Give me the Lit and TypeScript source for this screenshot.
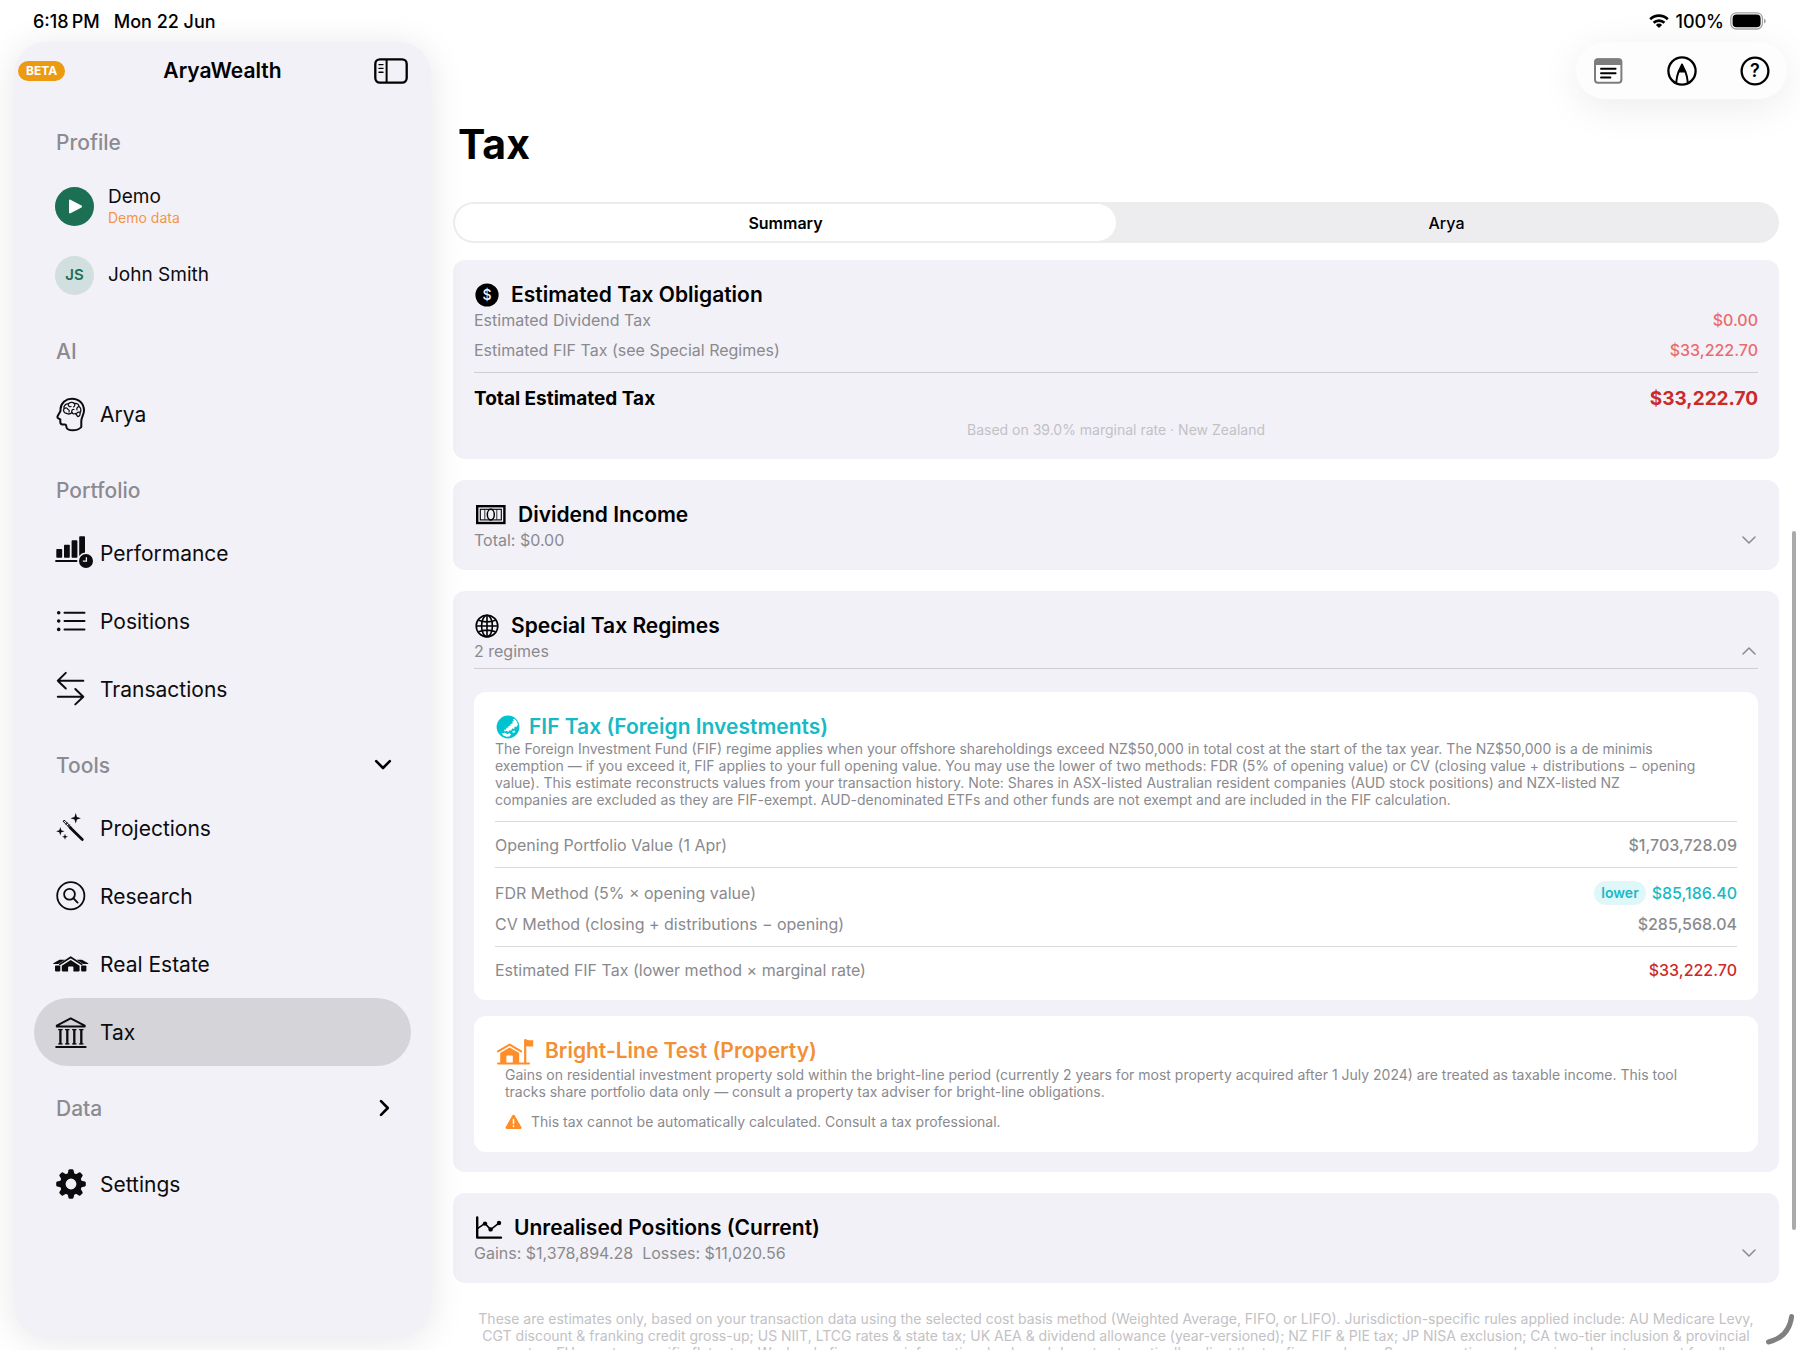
import { LitElement, html, svg, css, nothing, type TemplateResult } from "lit";
import { customElement, state } from "lit/decorators.js";
import { classMap } from "lit/directives/class-map.js";

type Icon = TemplateResult;

const box = (w: number, h: number, body: Icon) =>
  html`<svg class="icon" width=${w} height=${h} viewBox="0 0 ${w} ${h}" aria-hidden="true">${body}</svg>`;

const star = (x: number, y: number, r: number) => {
  const k = r * 0.24;
  return svg`<path fill="currentColor" d="M${x} ${y - r}L${x + k} ${y - k}L${x + r} ${y}L${x + k} ${y + k}L${x} ${y + r}L${x - k} ${y + k}L${x - r} ${y}L${x - k} ${y - k}Z"/>`;
};

const line = (d: string, w = 2) =>
  svg`<path d=${d} fill="none" stroke="currentColor" stroke-width=${w} stroke-linecap="round" stroke-linejoin="round"/>`;

/* Sidebar icons, each on a 40 x 40 canvas */
const navIcons: Record<string, Icon> = {
  arya: svg`
    ${line("M9.5 15C10 8.5 15 4.7 21 4.7C28 4.7 33 9.5 33 16.5C33 20.5 30.5 23 30.3 27V33C28.5 35.3 25 36.3 21.5 36.3C18.5 36.3 16 35 15.5 33.5C15.2 32 15.5 30.4 14 30.4H11.5C9.8 30.4 9.3 29.5 9.3 28V25.3L7.3 24.3C6.3 23.8 6.2 23 6.7 22L9.5 17Z")}
    ${line("M16 19.5C13 19.5 11.8 16.5 13 14.5C12.5 11.5 15 9.5 17.3 10C18.5 8 22 7.8 23.3 9.5C26 8.8 28 10.5 28 12.5C30.3 14 30.3 17 29 18.5C29.5 20.5 28.5 22.3 26.8 22.6L24.5 19.5C22.5 20.5 21.3 19.5 21 18.5C19.5 20 17.5 20.3 16 19.5Z", 1.3)}
    ${line("M13.5 14.5C15 13.3 16.5 14 17 15.5M17.3 10.2C17 12 18.5 13.3 20 12.5M21 18.5C20 16.5 21.5 15 23 15.5M23.3 9.7C24.3 11 23.8 12.5 22.5 13M28 12.7C26.3 13 25.3 14.3 26 16M29 18.3C27.5 17.8 26 18.5 25.5 19.8M18 18C18.5 17 18.3 16.3 17.8 15.8", 1.2)}`,
  performance: svg`
    <g fill="currentColor">
      <rect x="5.3" y="16" width="5.9" height="8.8" rx="0.8"/>
      <rect x="13" y="11.7" width="5.8" height="13.1" rx="0.8"/>
      <rect x="20.6" y="7.3" width="5.8" height="17.5" rx="0.8"/>
      <path d="M29 3.3H33.2Q34 3.3 34 4.1V19.6A8.4 8.4 0 0 0 28.2 23V4.1Q28.2 3.3 29 3.3Z"/>
      <circle cx="35" cy="28" r="7"/>
      <rect x="4.3" y="27" width="22" height="2" rx="0.6"/>
    </g>
    <path d="M35.4 24.2V28.2H31.8" fill="none" stroke="#f2f1f8" stroke-width="1.3"/>`,
  positions: svg`
    <g fill="currentColor"><circle cx="7.7" cy="11.8" r="1.8"/><circle cx="7.7" cy="20" r="1.8"/><circle cx="7.7" cy="28.4" r="1.8"/></g>
    ${line("M13.5 11.8H33.5M13.5 20H33.5M13.5 28.4H33.5")}`,
  transactions: line("M32.3 11.7H6.8M14.8 3.9L6.8 11.7L14.8 19.5M6.8 27.7H32.3M24.3 20L32.3 27.7L24.3 35.4"),
  projections: svg`
    ${line("M19 19.4L31.3 31.6", 2.8)}
    ${line("M13.6 12.4L20.4 19.2M12.4 13.6L19.2 20.4M12.4 13.6Q12 12 13.6 12.4M15 16.2L16.4 14.8M17 18.2L18.4 16.8", 1)}
    ${star(24.7, 10.3, 5.2)}${star(9.3, 23.3, 4.2)}${star(14, 28.7, 3)}`,
  research: svg`
    <circle cx="19.8" cy="19.8" r="13.6" fill="none" stroke="currentColor" stroke-width="1.8"/>
    <circle cx="18.5" cy="18.3" r="5.4" fill="none" stroke="currentColor" stroke-width="1.8"/>
    ${line("M22.5 22.4L26.6 26.6", 1.9)}`,
  estate: svg`
    ${line("M8.8 20.4L19.7 13.2L30.7 20.4", 1.7)}
    <g fill="currentColor">
      <path d="M19.7 15.9L28.6 21.8V26.6Q28.6 27.4 27.8 27.4H22.4V23.2Q22.4 22.4 21.6 22.4H17.9Q17.1 22.4 17.1 23.2V27.4H11.6Q10.8 27.4 10.8 26.6V21.8Z"/>
      <path d="M8.5 15.8H14L7.4 20H2.6Q1.6 19.8 2.4 19.2Z"/>
      <path d="M31 15.8H25.5L32.1 20H36.9Q37.9 19.8 37.1 19.2Z"/>
      <rect x="4" y="21.6" width="5.3" height="5.8" rx="0.8"/>
      <rect x="30.1" y="21.6" width="5.3" height="5.8" rx="0.8"/>
    </g>`,
  tax: svg`
    <path d="M5.8 13.6L19.7 6.4L33.7 13.6V14.4H5.8Z" fill="none" stroke="currentColor" stroke-width="2" stroke-linejoin="round"/>
    <path d="M9.4 17.5V32.3M16.3 17.5V32.3M23.3 17.5V32.3M30.3 17.5V32.3" stroke="currentColor" stroke-width="2.3"/>
    <path d="M7.2 17.6H11.6M14.1 17.6H18.5M21.1 17.6H25.5M28.1 17.6H32.5M7.2 31.9H11.6M14.1 31.9H18.5M21.1 31.9H25.5M28.1 31.9H32.5" stroke="currentColor" stroke-width="1.2"/>
    ${line("M5.2 34.9H34.6")}`,
  settings: svg`
    <circle cx="20" cy="20" r="8.2" fill="none" stroke="currentColor" stroke-width="5.6"/>
    ${[0, 45, 90, 135, 180, 225, 270, 315].map(
      (a) => svg`<path d="M16.4 10.5L17.5 6.2Q17.8 5.2 18.8 5.2H21.2Q22.2 5.2 22.5 6.2L23.6 10.5Z" fill="currentColor" transform="rotate(${a} 20 20)"/>`
    )}`,
};

const dollarIcon = box(26, 28, svg`
  <circle cx="13" cy="14" r="11.6" fill="#000"/>
  <text x="13" y="19" text-anchor="middle" font-size="14" font-weight="500" fill="#f2f1f7">$</text>`);

const noteIcon = box(33, 28, svg`
  <rect x="3.2" y="5.2" width="27.2" height="16.8" fill="none" stroke="#000" stroke-width="2.4"/>
  <rect x="6.3" y="8.3" width="21" height="10.6" fill="none" stroke="#000" stroke-width="1.1"/>
  <path d="M10.8 8.5V18.7M22.8 8.5V18.7" stroke="#000" stroke-width="0.8"/>
  <ellipse cx="16.8" cy="13.6" rx="3.5" ry="5.3" fill="none" stroke="#000" stroke-width="1.5"/>`);

const globeIcon = box(26, 28, svg`
  <g fill="none" stroke="#000" stroke-width="1.6">
    <circle cx="13" cy="14" r="10.8"/>
    <ellipse cx="13" cy="14" rx="5.4" ry="10.8"/>
    <path d="M13 3.2V24.8M2.2 14H23.8M4.6 8.2Q13 11.6 21.4 8.2M4.6 19.8Q13 16.4 21.4 19.8"/>
  </g>`);

const chartIcon = box(29, 28, svg`
  <path d="M3.2 3.4V23.6H27" fill="none" stroke="#000" stroke-width="2.4" stroke-linecap="round" stroke-linejoin="round"/>
  <path d="M3.4 14.6L11 9.4L16.6 15.6L25.2 8.8" fill="none" stroke="#000" stroke-width="1.6" stroke-linejoin="round"/>
  <g><circle cx="11" cy="9.6" r="2.2"/><circle cx="16.6" cy="15.4" r="2.2"/><circle cx="25" cy="9" r="2.2"/></g>`);

const earthIcon = box(26, 28, svg`
  <circle cx="13" cy="14" r="11.4" fill="#00c3d0"/>
  <g fill="#fff">
    <path d="M23 11.8L21.6 8L19.4 6L17.8 6.2L19 8L17.2 8.8L17.8 10.4L15.4 11L15.8 12.6L13.4 13L13.6 14.6L11.4 14.8L11.2 16.4L9 16.8L9.6 18.6L12 17.8L13.2 19L14.6 17.2L16.2 17.6L17.2 15.4L19.4 15.8L19.6 13.6L21.4 14Z"/>
    <path d="M6.6 20.6L9.8 19.8L12.4 21L14.8 20.2L16 21.6L14.6 23.4L11.6 23.8L8.6 22.8Z"/>
    <path d="M17.2 18.2L19.8 17.4L20 19.2L18 20Z"/>
  </g>`);

const houseFlagIcon = box(42, 28, svg`
  <g fill="none" stroke="#ff8d28" stroke-linecap="round" stroke-linejoin="round">
    <path d="M3 14.4L14.6 7.6L26.2 14.4" stroke-width="2"/>
    <path d="M3 26.4H34" stroke-width="2"/>
    <path d="M30.2 26V3.2" stroke-width="2.2"/>
  </g>
  <g fill="#ff8d28">
    <path d="M14.6 10.4L24.2 16V26H17.8V19.2Q17.8 18.4 17 18.4H12.2Q11.4 18.4 11.4 19.2V26H5.2V16Z"/>
    <path d="M30.2 2.2L33.8 3.2H38.2V9.6H33.8L30.2 9Z"/>
  </g>`);

const warnIcon = box(17, 16, svg`
  <path d="M8.5 2L15.2 13.6H1.8Z" fill="#ff8d28" stroke="#ff8d28" stroke-width="2.6" stroke-linejoin="round"/>
  <path d="M8.5 5.4V9.6M8.5 11.8V12.6" stroke="#fff" stroke-width="1.5" stroke-linecap="round"/>`);

const chevron = (open: boolean) => box(14, 10, svg`
  <path d=${open ? "M1 8L7 2L13 8" : "M1 2L7 8L13 2"} fill="none" stroke="#8a8a8e" stroke-width="1.5" stroke-linecap="round" stroke-linejoin="round"/>`);

interface NavItem { id: string; label: string }

@customElement("app-sidebar")
export class AppSidebar extends LitElement {
  @state() private selected = "tax";

  static styles = css`
    :host {
      display: flex;
      flex-direction: column;
      background: #f2f1f8;
      border-radius: 32px;
      box-shadow: 0 4px 36px rgba(0, 0, 0, 0.1);
      font-family: Inter, "Liberation Sans", sans-serif;
      color: #0c0c0e;
    }
    svg { display: block; overflow: visible; flex: none; }
    button {
      font: inherit; color: inherit; border: 0; background: none; padding: 0; margin: 0;
      text-align: left; cursor: pointer;
    }
    header {
      display: grid;
      grid-template-columns: 1fr auto 1fr;
      align-items: center;
      height: 58px;
      padding: 0 23px 0 4px;
    }
    .beta {
      justify-self: start;
      background: #ec9a12;
      color: #fff;
      font-size: 12px;
      font-weight: 700;
      line-height: 20px;
      padding: 0 8px;
      border-radius: 10px;
    }
    .brand { font-size: 21px; font-weight: 600; margin: 0 0 0 19px; line-height: 28px; color: #000; }
    .toggle { justify-self: end; }
    nav { display: flex; flex-direction: column; padding: 0 20px; }
    .section {
      display: flex;
      align-items: center;
      justify-content: space-between;
      width: 100%;
      height: 71px;
      box-sizing: border-box;
      padding: 13px 20px 0 22px;
      margin: 0;
      font-size: 21px;
      font-weight: 500;
      color: #8b8b90;
    }
    h2 { margin: 0; font-weight: 500; }
    .section svg { color: #000; }
    ul { list-style: none; margin: 0; padding: 0; }
    .row {
      display: flex;
      align-items: center;
      width: 100%;
      height: 68px;
      font-size: 21px;
      border-radius: 34px;
      padding-left: 17px;
      gap: 9px;
    }
    .row.selected { background: #d5d4d9; }
    .profile { padding-left: 21px; gap: 14px; font-size: 19px; line-height: 24px; }
    .tall { height: 70px; }
    .avatar {
      display: grid;
      place-items: center;
      width: 39px;
      height: 39px;
      border-radius: 50%;
      flex: none;
      background: #d1dfdf;
      color: #1f6e55;
      font-size: 15px;
      font-weight: 600;
    }
    .avatar.green { background: #1d6f54; }
    .who { display: flex; flex-direction: column; }
    .note { color: #f29548; font-size: 14px; line-height: 18px; }
    .last { margin-top: 13px; }
  `;

  private row(item: NavItem) {
    const on = this.selected === item.id;
    return html`<li>
      <button class=${classMap({ row: true, selected: on })} aria-current=${on ? "page" : "false"}
        @click=${() => (this.selected = item.id)}>
        ${box(40, 40, navIcons[item.id])}<span>${item.label}</span>
      </button>
    </li>`;
  }

  private list(items: NavItem[], extra = "") {
    return html`<ul class=${extra}>${items.map((i) => this.row(i))}</ul>`;
  }

  render() {
    return html`
      <header>
        <span class="beta">BETA</span>
        <h1 class="brand">AryaWealth</h1>
        <button class="toggle" aria-label="Toggle sidebar">
          ${box(34, 26, svg`
            <rect x="1.3" y="1.3" width="31.4" height="23.4" rx="4.6" fill="none" stroke="#000" stroke-width="2.3"/>
            <path d="M12.6 1.5V24.5" stroke="#000" stroke-width="2"/>
            <path d="M5 6.6H9M5 10.4H9M5 14.2H9" stroke="#000" stroke-width="1.4" stroke-linecap="round"/>`)}
        </button>
      </header>
      <nav>
        <h2 class="section">Profile</h2>
        <ul>
          <li><button class="row profile tall">
            <span class="avatar green">${box(39, 39, svg`<path d="M15 13.6L26 19.5L15 25.4Z" fill="#fff" stroke="#fff" stroke-width="2" stroke-linejoin="round"/>`)}</span>
            <span class="who"><span>Demo</span><span class="note">Demo data</span></span>
          </button></li>
          <li><button class="row profile"><span class="avatar">JS</span><span>John Smith</span></button></li>
        </ul>
        <h2 class="section">AI</h2>
        ${this.list([{ id: "arya", label: "Arya" }])}
        <h2 class="section">Portfolio</h2>
        ${this.list([
          { id: "performance", label: "Performance" },
          { id: "positions", label: "Positions" },
          { id: "transactions", label: "Transactions" },
        ])}
        <h2><button class="section" aria-expanded="true">Tools
          ${box(16, 10, line("M1.2 1.2L8 8L14.8 1.2", 2.6))}</button></h2>
        ${this.list([
          { id: "projections", label: "Projections" },
          { id: "research", label: "Research" },
          { id: "estate", label: "Real Estate" },
          { id: "tax", label: "Tax" },
        ])}
        <h2><button class="section" aria-expanded="false">Data
          ${box(14, 16, line("M4 1.2L10.8 8L4 14.8", 2.6))}</button></h2>
        ${this.list([{ id: "settings", label: "Settings" }], "last")}
      </nav>`;
  }
}

@customElement("app-root")
export class AppRoot extends LitElement {
  @state() private tab = "Summary";

  static styles = css`
    :host {
      display: flex;
      flex-direction: column;
      position: relative;
      height: 100vh;
      overflow: hidden;
      background: #fff;
      font-family: Inter, "Liberation Sans", sans-serif;
      color: #000;
    }
    svg { display: block; flex: none; }
    button {
      font: inherit; color: inherit; border: 0; background: none; padding: 0; margin: 0;
      text-align: left; cursor: pointer;
    }
    h1, h2, h3, p, dl, dd { margin: 0; }
    .status {
      display: flex;
      align-items: center;
      gap: 14px;
      height: 42px;
      flex: none;
      padding: 0 34px 0 33px;
      font-size: 18px;
      font-weight: 500;
      position: relative;
      z-index: 2;
    }
    .power { display: flex; align-items: center; gap: 6px; margin-left: auto; }
    .shell { display: flex; flex: 1; min-height: 0; }
    app-sidebar { flex: 0 0 417px; margin: 0 0 13px 14px; z-index: 1; }
    main { display: flex; flex-direction: column; flex: 1; min-width: 0; }
    .toolbar {
      display: flex;
      align-items: center;
      justify-content: space-between;
      align-self: flex-end;
      width: 211px;
      height: 57px;
      flex: none;
      box-sizing: border-box;
      margin-right: 13px;
      padding: 0 17px;
      border-radius: 29px;
      background: #fdfdfd;
      box-shadow: 0 8px 40px rgba(0, 0, 0, 0.08);
    }
    .content { padding: 21px 21px 0 22px; }
    .title { font-size: 41px; line-height: 48px; font-weight: 700; padding-left: 5px; }
    .tabs {
      display: grid;
      grid-template-columns: 1fr 1fr;
      margin: 34px 0 17px;
      padding: 2px;
      border-radius: 21px;
      background: #ededef;
    }
    .tab { height: 37px; border-radius: 19px; text-align: center; font-size: 16px; font-weight: 500; }
    .tab.on { background: #fff; font-weight: 600; }
    .cards { display: flex; flex-direction: column; gap: 21px; }
    .card { background: #f2f1f7; border-radius: 12px; padding: 20px 21px 18px; }
    .card.open { padding-bottom: 20px; }
    .head {
      display: flex;
      align-items: center;
      gap: 11px;
      padding-top: 2px;
      font-size: 21px;
      line-height: 26px;
      height: 26px;
      font-weight: 600;
    }
    .fold { display: block; width: 100%; }
    .sub {
      display: flex;
      align-items: center;
      justify-content: space-between;
      padding-right: 2px;
      font-size: 16px;
      line-height: 24px;
      font-weight: 400;
      color: #8a8a8e;
      white-space: pre;
    }
    .line {
      display: flex;
      align-items: center;
      justify-content: space-between;
      font-size: 16px;
      line-height: 24px;
      color: #8a8a8e;
    }
    .line + .line { margin-top: 6px; }
    dd { display: flex; align-items: center; gap: 6px; font-weight: 500; }
    .soft { color: #ea6a6d; }
    .red { color: #cb2a2b; }
    .cyan { color: #17bac4; }
    .rule { border: 0; height: 1px; background: #cfced4; margin: 10px 0 11px; }
    .total { font-size: 19px; line-height: 30px; font-weight: 700; color: #000; }
    .total dd { font-weight: 700; }
    .basis { margin-top: 5px; text-align: center; font-size: 14px; line-height: 22px; color: #c2c1c6; }
    .regimes { display: flex; flex-direction: column; gap: 16px; margin-top: 23px; }
    .divide { border: 0; height: 1px; background: #cfced4; margin: 5px 0 0; }
    .regime { background: #fff; border-radius: 12px; padding: 20px 21px 18px; }
    .regime .head { gap: 8px; }
    .fif { color: #17bac4; }
    .bright { color: #f39035; }
    .text { font-size: 14px; line-height: 17px; color: #8a8a8e; white-space: pre-line; }
    .regime .rule { background: #dadadc; }
    .text + .rule { margin-top: 13px; }
    .methods { padding-top: 2px; }
    .methods .line + .line { margin-top: 7px; }
    .inset { padding: 2px 10px; }
    .warn { display: flex; align-items: center; gap: 9px; line-height: 20px; padding-top: 12px; }
    .badge {
      background: #e0f7f9;
      color: #17bac4;
      font-size: 14px;
      line-height: 24px;
      font-weight: 600;
      border-radius: 12px;
      padding: 0 7px;
    }
    .legal {
      margin: 27px 0 0;
      text-align: center;
      font-size: 14px;
      line-height: 17px;
      color: #c2c2c5;
      white-space: pre-line;
    }
    .thumb {
      position: absolute;
      right: 4px;
      top: 531px;
      width: 4px;
      height: 699px;
      border-radius: 2px;
      background: #aaaaaa;
    }
    .corner { position: absolute; right: 4px; bottom: 4px; }
  `;

  private pair(label: string, value: string, tone = "", badge = "") {
    return html`<div class="line"><dt>${label}</dt><dd class=${tone}>
      ${badge ? html`<span class="badge">${badge}</span>` : nothing}<span>${value}</span></dd></div>`;
  }

  private fold(icon: Icon, title: string, sub: string, open = false) {
    return html`<h2><button class="fold" aria-expanded=${open ? "true" : "false"}>
      <span class="head">${icon}${title}</span>
      <span class="sub"><span>${sub}</span>${chevron(open)}</span>
    </button></h2>`;
  }

  render() {
    return html`
      <div class="status">
        <span>6:18\u2009PM</span><span>Mon 22 Jun</span>
        <span class="power">
          ${box(20, 16, svg`
            <g fill="none" stroke="#000" stroke-width="2.7">
              <path d="M1.2 6.2A12.6 12.6 0 0 1 18.8 6.2"/>
              <path d="M4.6 9.8A7.8 7.8 0 0 1 15.4 9.8"/>
            </g>
            <path d="M10 15L6.9 11.9A4.4 4.4 0 0 1 13.1 11.9Z"/>`)}
          <span>100%</span>
          ${box(36, 18, svg`
            <rect x="0.8" y="0.8" width="31.6" height="16.2" rx="5.4" fill="none" stroke="#a3a3a3" stroke-width="1.3"/>
            <rect x="2.6" y="2.6" width="28" height="12.6" rx="3.8"/>
            <path d="M34 6.4Q35.8 7 35.8 9T34 11.6Z" fill="#a3a3a3"/>`)}
        </span>
      </div>
      <div class="shell">
        <app-sidebar></app-sidebar>
        <main>
          <div class="toolbar">
            <button aria-label="Notes">${box(30, 30, svg`
              <rect x="2" y="3.2" width="26.4" height="23.6" rx="3" fill="none" stroke="#7d7d7f" stroke-width="2"/>
              <path d="M1.6 9V5Q1.6 2.4 4.4 2.4H26Q28.8 2.4 28.8 5V9Z" fill="#7d7d7f"/>
              <path d="M8 12.8H22.6M8 17.2H22.6M8 21.5H17.4" stroke="#000" stroke-width="1.9" stroke-linecap="round"/>`)}</button>
            <button aria-label="Markup">${box(30, 30, svg`
              <circle cx="15" cy="15" r="13.6" fill="none" stroke="#000" stroke-width="2.3"/>
              <path d="M9.2 26.6Q9.8 20 11.6 15.6L15 8.6L18.4 15.6Q20.2 20 20.8 26.6" fill="none" stroke="#000" stroke-width="2" stroke-linejoin="round"/>
              <path d="M15 7.6L19 16.4H11Z"/>`)}</button>
            <button aria-label="Help">${box(30, 30, svg`
              <circle cx="15" cy="15" r="13.4" fill="none" stroke="#000" stroke-width="2.3"/>
              <text x="15" y="21.4" text-anchor="middle" font-size="18" font-weight="600">?</text>`)}</button>
          </div>
          <div class="content">
            <h1 class="title">Tax</h1>
            <div class="tabs" role="tablist">
              ${["Summary", "Arya"].map((t) => html`
                <button role="tab" aria-selected=${this.tab === t ? "true" : "false"}
                  class=${classMap({ tab: true, on: this.tab === t })} @click=${() => (this.tab = t)}>${t}</button>`)}
            </div>
            <div class="cards">
              <section class="card">
                <h2 class="head">${dollarIcon}Estimated Tax Obligation</h2>
                <dl>
                  ${this.pair("Estimated Dividend Tax", "$0.00", "soft")}
                  ${this.pair("Estimated FIF Tax (see Special Regimes)", "$33,222.70", "soft")}
                </dl>
                <hr class="rule">
                <dl><div class="line total"><dt>Total Estimated Tax</dt><dd class="red">$33,222.70</dd></div></dl>
                <p class="basis">Based on 39.0% marginal rate · New Zealand</p>
              </section>
              <section class="card">${this.fold(noteIcon, "Dividend Income", "Total: $0.00")}</section>
              <section class="card open">
                ${this.fold(globeIcon, "Special Tax Regimes", "2 regimes", true)}
                <hr class="divide">
                <div class="regimes">
                  <article class="regime">
                    <h3 class="head fif">${earthIcon}FIF Tax (Foreign Investments)</h3>
                    <p class="text">${"The Foreign Investment Fund (FIF) regime applies when your offshore shareholdings exceed NZ$50,000 in total cost at the start of the tax year. The NZ$50,000 is a de minimis\nexemption — if you exceed it, FIF applies to your full opening value. You may use the lower of two methods: FDR (5% of opening value) or CV (closing value + distributions − opening\nvalue). This estimate reconstructs values from your transaction history. Note: Shares in ASX-listed Australian resident companies (AUD stock positions) and NZX-listed NZ\ncompanies are excluded as they are FIF-exempt. AUD-denominated ETFs and other funds are not exempt and are included in the FIF calculation."}</p>
                    <hr class="rule">
                    <dl>${this.pair("Opening Portfolio Value (1 Apr)", "$1,703,728.09")}</dl>
                    <hr class="rule">
                    <dl class="methods">
                      ${this.pair("FDR Method (5% × opening value)", "$85,186.40", "cyan", "lower")}
                      ${this.pair("CV Method (closing + distributions − opening)", "$285,568.04")}
                    </dl>
                    <hr class="rule">
                    <dl>${this.pair("Estimated FIF Tax (lower method × marginal rate)", "$33,222.70", "red")}</dl>
                  </article>
                  <article class="regime">
                    <h3 class="head bright">${houseFlagIcon}Bright-Line Test (Property)</h3>
                    <div class="inset">
                      <p class="text">${"Gains on residential investment property sold within the bright-line period (currently 2 years for most property acquired after 1 July 2024) are treated as taxable income. This tool\ntracks share portfolio data only — consult a property tax adviser for bright-line obligations."}</p>
                      <p class="text warn">${warnIcon}This tax cannot be automatically calculated. Consult a tax professional.</p>
                    </div>
                  </article>
                </div>
              </section>
              <section class="card">${this.fold(chartIcon, "Unrealised Positions (Current)", "Gains: $1,378,894.28  Losses: $11,020.56")}</section>
            </div>
            <p class="legal">${"These are estimates only, based on your transaction data using the selected cost basis method (Weighted Average, FIFO, or LIFO). Jurisdiction-specific rules applied include: AU Medicare Levy,\nCGT discount & franking credit gross-up; US NIIT, LTCG rates & state tax; UK AEA & dividend allowance (year-versioned); NZ FIF & PIE tax; JP NISA exclusion; CA two-tier inclusion & provincial\nsurtax; EU country-specific flat rates. Wash sale figures are informational only and do not automatically adjust the tax figures above. Superannuation and pensions do not account for all"}</p>
          </div>
        </main>
      </div>
      <div class="thumb"></div>
      <svg class="corner" width="34" height="34" viewBox="0 0 34 34" aria-hidden="true">
        <path d="M29.6 4.6Q27 25 6.5 30" fill="none" stroke="#808080" stroke-width="5" stroke-linecap="round"/>
      </svg>`;
  }
}
